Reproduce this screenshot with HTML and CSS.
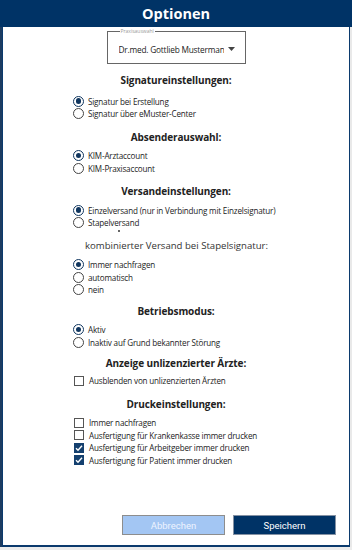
FILE: index.html
```html
<!DOCTYPE html>
<html lang="de">
<head>
<meta charset="utf-8">
<title>Optionen</title>
<link rel="stylesheet" href="styles.css">
</head>
<body>
<div class="screen">
  <header class="titlebar">Optionen</header>
  <div class="stage">
    <div class="dialog">
      <div class="content">
        <div class="select">
          <span class="select-label">Praxisauswahl</span>
          <span class="select-value">Dr.med. Gottlieb Mustermann</span>
          <svg class="select-arrow" width="7" height="4" viewBox="0 0 7 4"><path d="M0 0h7L3.5 4z" fill="#444"/></svg>
        </div>

        <section class="group group-first">
          <h2 class="group-title">Signatureinstellungen:</h2>
          <ul class="options">
            <li class="option"><span class="radio radio-on"></span>Signatur bei Erstellung</li>
            <li class="option"><span class="radio"></span>Signatur über eMuster-Center</li>
          </ul>
        </section>

        <section class="group">
          <h2 class="group-title">Absenderauswahl:</h2>
          <ul class="options">
            <li class="option"><span class="radio radio-on"></span>KIM-Arztaccount</li>
            <li class="option"><span class="radio"></span>KIM-Praxisaccount</li>
          </ul>
        </section>

        <section class="group">
          <h2 class="group-title">Versandeinstellungen:</h2>
          <ul class="options">
            <li class="option"><span class="radio radio-on"></span>Einzelversand (nur in Verbindung mit Einzelsignatur)</li>
            <li class="option"><span class="radio"></span>Stapelversand</li>
          </ul>
          <div class="speck"></div>
        </section>

        <section class="group group-sub">
          <h3 class="group-subtitle">kombinierter Versand bei Stapelsignatur:</h3>
          <ul class="options">
            <li class="option"><span class="radio radio-on"></span>Immer nachfragen</li>
            <li class="option"><span class="radio"></span>automatisch</li>
            <li class="option"><span class="radio"></span>nein</li>
          </ul>
        </section>

        <section class="group">
          <h2 class="group-title">Betriebsmodus:</h2>
          <ul class="options">
            <li class="option"><span class="radio radio-on"></span>Aktiv</li>
            <li class="option"><span class="radio"></span>Inaktiv auf Grund bekannter Störung</li>
          </ul>
        </section>

        <section class="group group-tight">
          <h2 class="group-title">Anzeige unlizenzierter Ärzte:</h2>
          <ul class="options">
            <li class="option"><span class="check"></span>Ausblenden von unlizenzierten Ärzten</li>
          </ul>
        </section>

        <section class="group">
          <h2 class="group-title">Druckeinstellungen:</h2>
          <ul class="options">
            <li class="option"><span class="check"></span>Immer nachfragen</li>
            <li class="option"><span class="check"></span>Ausfertigung für Krankenkasse immer drucken</li>
            <li class="option"><span class="check check-on"><svg width="10" height="10" viewBox="0 0 10 10"><path d="M2 5.2l2 2 4-4.4" fill="none" stroke="#fff" stroke-width="1.4"/></svg></span>Ausfertigung für Arbeitgeber immer drucken</li>
            <li class="option"><span class="check check-on"><svg width="10" height="10" viewBox="0 0 10 10"><path d="M2 5.2l2 2 4-4.4" fill="none" stroke="#fff" stroke-width="1.4"/></svg></span>Ausfertigung für Patient immer drucken</li>
          </ul>
        </section>
      </div>
      <div class="actions">
        <button class="btn btn-cancel" type="button">Abbrechen</button>
        <button class="btn btn-save" type="button">Speichern</button>
      </div>
    </div>
  </div>
</div>
</body>
</html>
```
FILE: styles.css
```css
* { box-sizing: border-box; }
html, body { margin: 0; padding: 0; }
body {
  width: 352px;
  height: 550px;
  overflow: hidden;
  font-family: "Open Sans", "Noto Sans", sans-serif;
  color: #222;
}
.screen {
  width: 352px;
  height: 550px;
  display: flex;
  flex-direction: column;
  background: #ececec;
}
.titlebar {
  height: 27px;
  flex: none;
  background: #003366;
  color: #fff;
  font-weight: 700;
  font-size: 14.5px;
  display: flex;
  align-items: center;
  justify-content: center;
}
.stage {
  height: 520px;
  flex: none;
  display: flex;
  background: linear-gradient(to right, #1d3c61 0 2px, #e9e9e9 2px);
}
.dialog {
  margin-left: 2px;
  width: 348px;
  height: 520px;
  background: #fff;
  border: 1px solid #0b3a6d;
  border-top: none;
  border-bottom-width: 2px;
  display: flex;
  flex-direction: column;
}
.content {
  flex: 1;
  padding-top: 4px;
}
.select {
  position: relative;
  width: 139px;
  height: 33px;
  margin: 0 auto;
  border: 1px solid #666;
  display: flex;
  align-items: center;
  padding: 3px 0 0 11px;
}
.select-label {
  position: absolute;
  left: 12px;
  top: -4px;
  font-size: 5px;
  line-height: 7px;
  color: #9a9a9a;
  background: #fff;
  padding: 0 1px;
}
.select-value {
  width: 105px;
  white-space: nowrap;
  overflow: hidden;
  font-size: 8.3px;
  letter-spacing: -0.2px;
  color: #222;
}
.select-arrow {
  margin-left: 4px;
  margin-top: -1px;
}
.group {
  margin-top: 10px;
}
.group-first { margin-top: 9px; }
.group-first .options { margin-top: 8px; }
.group-sub { margin-top: 10px; }
.group-tight { margin-top: 8px; }
.group-tight + .group { margin-top: 10px; }
.group-sub + .group { margin-top: 8px; }
.group-tight .options { margin-top: 4px; }
.group-title {
  margin: 0;
  height: 14px;
  line-height: 14px;
  text-align: center;
  font-size: 10px;
  font-weight: 700;
  letter-spacing: -0.1px;
  color: #222;
}
.group-subtitle {
  margin: 0;
  height: 14px;
  line-height: 14px;
  text-align: center;
  font-size: 9.6px;
  font-weight: 400;
  color: #333;
  padding-left: 1px;
}
.options {
  list-style: none;
  margin: 5.8px 0 0;
  padding: 0 0 0 70px;
}
.option {
  height: 12.4px;
  display: flex;
  align-items: center;
  font-size: 8.1px;
  letter-spacing: -0.18px;
  color: #222;
  white-space: nowrap;
}
.radio {
  flex: none;
  width: 11px;
  height: 11px;
  border-radius: 50%;
  border: 1px solid #444;
  margin-right: 4px;
  position: relative;
}
.radio-on {
  border-color: #10365f;
  border-width: 1.2px;
}
.radio-on::after {
  content: "";
  position: absolute;
  left: 1.6px;
  top: 1.6px;
  width: 5.4px;
  height: 5.4px;
  border-radius: 50%;
  background: #10365f;
}
.check {
  flex: none;
  width: 10px;
  height: 10px;
  border: 1px solid #555;
  margin: 0 5px 0 1px;
  display: flex;
}
.check svg { display: block; margin: -1px; }
.check-on {
  background: #14406f;
  border-color: #14406f;
}
.speck {
  width: 2px;
  height: 2px;
  margin: 1px 0 -3px 115px;
  background: #333;
  border-radius: 50%;
}
.actions {
  display: flex;
  justify-content: flex-end;
  gap: 8px;
  padding: 0 13px 10px 0;
}
.btn {
  width: 103px;
  height: 20px;
  font-family: Roboto, "Open Sans", sans-serif;
  font-size: 9.5px;
  border: 1px solid #8d8d8d;
  padding: 0;
  margin: 0;
  cursor: pointer;
}
.btn-cancel {
  background: #a3c6f3;
  color: #eef4ff;
}
.btn-save {
  background: #003366;
  color: #fff;
  border-color: #8592a4;
}
```
